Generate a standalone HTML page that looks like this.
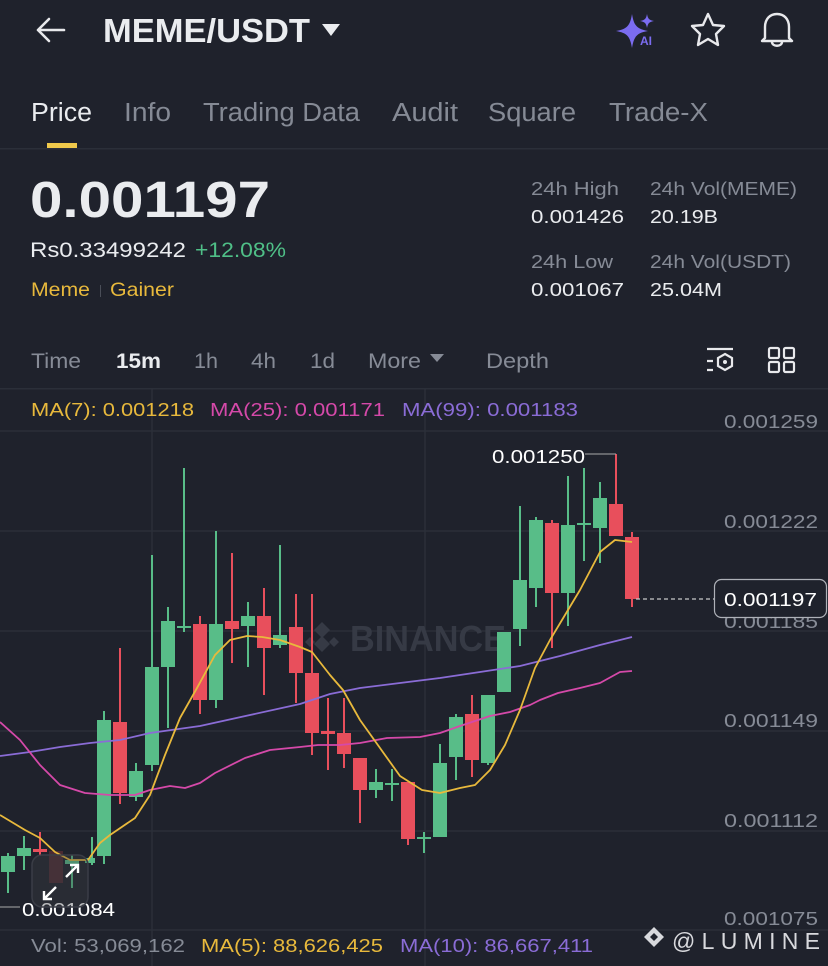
<!DOCTYPE html>
<html><head><meta charset="utf-8"><style>
html,body{margin:0;padding:0;background:#1f222c;}
svg{display:block;font-family:"Liberation Sans",sans-serif;}
</style></head><body>
<svg width="828" height="966" viewBox="0 0 828 966" xmlns="http://www.w3.org/2000/svg">
<rect width="828" height="966" fill="#1f222c"/>
<!-- header -->
<path d="M38 30 H64 M38 30 L49 19 M38 30 L49 41" stroke="#e8e9ec" stroke-width="2.6" fill="none" stroke-linecap="round"/>
<text x="103" y="42" font-size="33" font-weight="bold" fill="#eaecef" textLength="207" lengthAdjust="spacingAndGlyphs">MEME/USDT</text>
<path d="M322 24 H340 L331 36 Z" fill="#eaecef"/>
<path d="M632 14 C634 26 637 29 648 31 C637 33 634 36 632 48 C630 36 627 33 616 31 C627 29 630 26 632 14Z" fill="#7b6cf0"/>
<path d="M647 14 C648 19 649 20 654 21 C649 22 648 23 647 28 C646 23 645 22 640 21 C645 20 646 19 647 14Z" fill="#7b6cf0"/>
<text x="640" y="45" font-size="12" font-weight="bold" fill="#7b6cf0">AI</text>
<path d="M708 14 L713 25 L724 26 L716 34 L718 45 L708 39 L698 45 L700 34 L692 26 L703 25 Z" stroke="#e8e9ec" stroke-width="2.4" fill="none" stroke-linejoin="round"/>
<path d="M765 38 V27 C765 19 770 14 777 14 C784 14 789 19 789 27 V38 L792 41 H762 Z M772 42 C772 47 782 47 782 42" stroke="#e8e9ec" stroke-width="2.4" fill="none" stroke-linejoin="round"/>
<!-- tabs -->
<g font-size="25.5" lengthAdjust="spacingAndGlyphs">
<text x="31" y="121" fill="#eaecef" textLength="61" lengthAdjust="spacingAndGlyphs">Price</text>
<text x="124" y="121" fill="#858a95" textLength="47" lengthAdjust="spacingAndGlyphs">Info</text>
<text x="203" y="121" fill="#858a95" textLength="157" lengthAdjust="spacingAndGlyphs">Trading Data</text>
<text x="392" y="121" fill="#858a95" textLength="66" lengthAdjust="spacingAndGlyphs">Audit</text>
<text x="488" y="121" fill="#858a95" textLength="88" lengthAdjust="spacingAndGlyphs">Square</text>
<text x="609" y="121" fill="#858a95" textLength="99" lengthAdjust="spacingAndGlyphs">Trade-X</text>
</g>
<rect x="47" y="143" width="30" height="5" fill="#f0c94b"/>
<rect x="0" y="148" width="828" height="1.5" fill="#2b2f39"/>
<!-- price block -->
<text x="30" y="217" font-size="51" font-weight="bold" fill="#eaecef" textLength="240" lengthAdjust="spacingAndGlyphs">0.001197</text>
<text x="30" y="257" font-size="21" fill="#eaecef" textLength="156" lengthAdjust="spacingAndGlyphs">Rs0.33499242</text>
<text x="195" y="257" font-size="21" fill="#4fbf87" textLength="91" lengthAdjust="spacingAndGlyphs">+12.08%</text>
<text x="31" y="296" font-size="19.5" fill="#e8b93c" textLength="59" lengthAdjust="spacingAndGlyphs">Meme</text>
<rect x="100" y="285" width="1" height="12" fill="#4a4e58"/>
<text x="110" y="296" font-size="19.5" fill="#e8b93c" textLength="64" lengthAdjust="spacingAndGlyphs">Gainer</text>
<g font-size="18.5">
<text x="531" y="195" fill="#868b96" textLength="88" lengthAdjust="spacingAndGlyphs">24h High</text>
<text x="650" y="195" fill="#868b96" textLength="147" lengthAdjust="spacingAndGlyphs">24h Vol(MEME)</text>
<text x="531" y="223" fill="#eaecef" textLength="93" lengthAdjust="spacingAndGlyphs">0.001426</text>
<text x="650" y="223" fill="#eaecef" textLength="68" lengthAdjust="spacingAndGlyphs">20.19B</text>
<text x="531" y="268" fill="#868b96" textLength="82" lengthAdjust="spacingAndGlyphs">24h Low</text>
<text x="650" y="268" fill="#868b96" textLength="141" lengthAdjust="spacingAndGlyphs">24h Vol(USDT)</text>
<text x="531" y="296" fill="#eaecef" textLength="93" lengthAdjust="spacingAndGlyphs">0.001067</text>
<text x="650" y="296" fill="#eaecef" textLength="72" lengthAdjust="spacingAndGlyphs">25.04M</text>
</g>
<!-- timeframe row -->
<g font-size="21" fill="#868b96">
<text x="31" y="368" textLength="50" lengthAdjust="spacingAndGlyphs">Time</text>
<text x="116" y="368" fill="#eaecef" font-weight="bold" textLength="45" lengthAdjust="spacingAndGlyphs">15m</text>
<text x="194" y="368" textLength="24" lengthAdjust="spacingAndGlyphs">1h</text>
<text x="251" y="368" textLength="25" lengthAdjust="spacingAndGlyphs">4h</text>
<text x="310" y="368" textLength="25" lengthAdjust="spacingAndGlyphs">1d</text>
<text x="368" y="368" textLength="53" lengthAdjust="spacingAndGlyphs">More</text>
<text x="486" y="368" textLength="63" lengthAdjust="spacingAndGlyphs">Depth</text>
</g>
<path d="M430 354 H444 L437 362 Z" fill="#868b96"/>
<path d="M707 349 H733 M707 361 H713 M707 370 H713" stroke="#e8e9ec" stroke-width="2.2"/>
<path d="M725 354 L732 358 V366 L725 370 L718 366 V358 Z" stroke="#e8e9ec" stroke-width="2.2" fill="none"/>
<circle cx="725" cy="362" r="2" fill="#e8e9ec"/>
<g stroke="#e8e9ec" stroke-width="2.2" fill="none">
<rect x="769" y="348" width="10" height="10" rx="1.5"/><rect x="784" y="348" width="10" height="10" rx="1.5"/>
<rect x="769" y="362" width="10" height="10" rx="1.5"/><rect x="784" y="362" width="10" height="10" rx="1.5"/>
</g>
<rect x="0" y="388" width="828" height="1.5" fill="#2b2f39"/>
<!-- grid -->
<g stroke="#2d313b" stroke-width="1.3">
<line x1="0" y1="431" x2="828" y2="431"/><line x1="0" y1="531" x2="828" y2="531"/>
<line x1="0" y1="631" x2="828" y2="631"/><line x1="0" y1="731" x2="828" y2="731"/>
<line x1="0" y1="831" x2="828" y2="831"/><line x1="0" y1="930" x2="828" y2="930"/>
<line x1="152" y1="389" x2="152" y2="966"/><line x1="425" y1="389" x2="425" y2="966"/>
</g>
<!-- watermark -->
<g fill="#363a45">
<path d="M322 622 L330 630 L322 638 L314 630Z M322 636 L330 644 L322 652 L314 644Z M310 637 L315 642 L310 647 L305 642Z M334 637 L339 642 L334 647 L329 642Z"/>
<text x="350" y="651" font-size="36" font-weight="bold" textLength="156" lengthAdjust="spacingAndGlyphs">BINANCE</text>
</g>
<!-- MA legend -->
<g font-size="18.5">
<text x="31" y="416" fill="#e8b93c" textLength="163" lengthAdjust="spacingAndGlyphs">MA(7): 0.001218</text>
<text x="210" y="416" fill="#d549a9" textLength="175" lengthAdjust="spacingAndGlyphs">MA(25): 0.001171</text>
<text x="402" y="416" fill="#8a6cd6" textLength="176" lengthAdjust="spacingAndGlyphs">MA(99): 0.001183</text>
</g>
<!-- y labels -->
<g font-size="18.5" fill="#868b96">
<text x="724" y="428" textLength="94" lengthAdjust="spacingAndGlyphs">0.001259</text>
<text x="724" y="528" textLength="94" lengthAdjust="spacingAndGlyphs">0.001222</text>
<text x="724" y="628" textLength="94" lengthAdjust="spacingAndGlyphs">0.001185</text>
<text x="724" y="727" textLength="94" lengthAdjust="spacingAndGlyphs">0.001149</text>
<text x="724" y="827" textLength="94" lengthAdjust="spacingAndGlyphs">0.001112</text>
<text x="724" y="925" textLength="94" lengthAdjust="spacingAndGlyphs">0.001075</text>
</g>
<!-- candles -->
<g>
<g fill="#58bd88" stroke="#58bd88" stroke-width="2">
<line x1="8" y1="853" x2="8" y2="893"/><rect x="1" y="856" width="14" height="16" stroke="none"/>
<line x1="24" y1="836" x2="24" y2="870"/><rect x="17" y="848" width="14" height="8" stroke="none"/>
<line x1="72" y1="855" x2="72" y2="888"/><rect x="65" y="860" width="14" height="4" stroke="none"/>
<line x1="92" y1="837" x2="92" y2="865"/><rect x="85" y="858" width="10" height="5" stroke="none"/>
<line x1="104" y1="711" x2="104" y2="864"/><rect x="97" y="720" width="14" height="136" stroke="none"/>
<line x1="136" y1="763" x2="136" y2="801"/><rect x="129" y="771" width="14" height="26" stroke="none"/>
<line x1="152" y1="555" x2="152" y2="771"/><rect x="145" y="667" width="14" height="98" stroke="none"/>
<line x1="168" y1="607" x2="168" y2="728"/><rect x="161" y="621" width="14" height="46" stroke="none"/>
<line x1="184" y1="468" x2="184" y2="632"/><rect x="177" y="626" width="14" height="2" stroke="none"/>
<line x1="216" y1="531" x2="216" y2="708"/><rect x="209" y="624" width="14" height="76" stroke="none"/>
<line x1="248" y1="602" x2="248" y2="667"/><rect x="241" y="616" width="14" height="10" stroke="none"/>
<line x1="280" y1="545" x2="280" y2="648"/><rect x="273" y="635" width="14" height="10" stroke="none"/>
<line x1="376" y1="769" x2="376" y2="798"/><rect x="369" y="782" width="14" height="8" stroke="none"/>
<line x1="392" y1="769" x2="392" y2="801"/><rect x="385" y="783" width="14" height="2" stroke="none"/>
<line x1="424" y1="832" x2="424" y2="853"/><rect x="417" y="837" width="14" height="2" stroke="none"/>
<line x1="440" y1="744" x2="440" y2="837"/><rect x="433" y="763" width="14" height="74" stroke="none"/>
<line x1="456" y1="714" x2="456" y2="780"/><rect x="449" y="717" width="14" height="40" stroke="none"/>
<line x1="488" y1="695" x2="488" y2="765"/><rect x="481" y="695" width="14" height="68" stroke="none"/>
<rect x="497" y="632" width="14" height="60" stroke="none"/>
<line x1="520" y1="506" x2="520" y2="646"/><rect x="513" y="580" width="14" height="49" stroke="none"/>
<line x1="536" y1="517" x2="536" y2="607"/><rect x="529" y="520" width="14" height="68" stroke="none"/>
<line x1="568" y1="476" x2="568" y2="626"/><rect x="561" y="525" width="14" height="68" stroke="none"/>
<line x1="584" y1="468" x2="584" y2="561"/><rect x="577" y="523" width="14" height="2" stroke="none"/>
<line x1="600" y1="482" x2="600" y2="563"/><rect x="593" y="498" width="14" height="30" stroke="none"/>
</g>
<g fill="#e84f5c" stroke="#e84f5c" stroke-width="2">
<line x1="40" y1="832" x2="40" y2="856"/><rect x="33" y="849" width="14" height="3" stroke="none"/>
<line x1="120" y1="648" x2="120" y2="804"/><rect x="113" y="722" width="14" height="71" stroke="none"/>
<line x1="200" y1="616" x2="200" y2="714"/><rect x="193" y="624" width="14" height="76" stroke="none"/>
<line x1="232" y1="553" x2="232" y2="663"/><rect x="225" y="621" width="14" height="8" stroke="none"/>
<line x1="264" y1="588" x2="264" y2="695"/><rect x="257" y="616" width="14" height="32" stroke="none"/>
<line x1="296" y1="594" x2="296" y2="703"/><rect x="289" y="627" width="14" height="46" stroke="none"/>
<line x1="312" y1="594" x2="312" y2="755"/><rect x="305" y="673" width="14" height="60" stroke="none"/>
<line x1="328" y1="698" x2="328" y2="770"/><rect x="321" y="731" width="14" height="3" stroke="none"/>
<line x1="344" y1="698" x2="344" y2="768"/><rect x="337" y="733" width="14" height="21" stroke="none"/>
<line x1="360" y1="758" x2="360" y2="823"/><rect x="353" y="758" width="14" height="32" stroke="none"/>
<line x1="408" y1="782" x2="408" y2="845"/><rect x="401" y="782" width="14" height="57" stroke="none"/>
<line x1="472" y1="695" x2="472" y2="777"/><rect x="465" y="714" width="14" height="46" stroke="none"/>
<line x1="552" y1="520" x2="552" y2="648"/><rect x="545" y="523" width="14" height="70" stroke="none"/>
<line x1="616" y1="454" x2="616" y2="536"/><rect x="609" y="504" width="14" height="32" stroke="none"/>
<line x1="632" y1="532" x2="632" y2="607"/><rect x="625" y="537" width="14" height="62" stroke="none"/>
</g>
<rect x="49" y="851" width="14" height="32" fill="#4a2a32"/>
</g>
<!-- MA lines -->
<g fill="none" stroke-width="1.8" stroke-linejoin="round">
<polyline stroke="#8a6cd6" points="0,756 30,752 60,747 90,743 120,740 150,733 200,726 250,715 300,704 330,694 360,688 400,683 440,678 480,672 520,666 560,656 600,645 632,637"/>
<polyline stroke="#d549a9" points="0,722 20,740 40,765 60,785 85,793 110,795 135,795 150,790 170,786 185,788 200,783 215,773 245,758 270,750 300,747 318,745 340,745 360,743 387,738 420,737 440,733 460,726 490,716 510,712 530,705 540,700 558,693 580,688 600,683 620,672 632,671"/>
<polyline stroke="#e8b93c" points="0,815 25,830 40,838 55,852 70,860 88,860 100,843 110,835 135,818 150,795 165,755 180,718 197,688 215,655 230,640 247,636 262,637 280,640 300,647 312,652 330,675 343,690 360,720 380,748 400,776 422,790 440,793 460,788 475,785 490,770 505,745 520,710 535,668 550,640 565,615 580,590 600,552 615,540 632,542"/>
</g>
<!-- annotations -->
<text x="492" y="463" font-size="18.5" fill="#ffffff" textLength="93" lengthAdjust="spacingAndGlyphs">0.001250</text>
<path d="M585 454 H616" stroke="#aaa" stroke-width="1"/>
<path d="M636 599 H714" stroke="#c8c8c8" stroke-width="1.2" stroke-dasharray="4,3"/>
<rect x="714.5" y="579.5" width="112" height="38" rx="7" fill="#1f222c" stroke="#aeb1b8" stroke-width="1.2"/>
<text x="724" y="606" font-size="18.5" fill="#ffffff" textLength="93" lengthAdjust="spacingAndGlyphs">0.001197</text>
<path d="M0 907 H20" stroke="#aaa" stroke-width="1"/>
<text x="22" y="916" font-size="18.5" fill="#ffffff" textLength="93" lengthAdjust="spacingAndGlyphs">0.001084</text>
<rect x="32" y="855" width="56" height="52" rx="10" fill="rgba(60,62,70,0.35)" stroke="#3a3d46" stroke-width="1.5"/>
<path d="M66 877 L78 865 M70 865 H78 V873 M56 887 L44 899 M44 891 V899 H52" stroke="#fff" stroke-width="2.4" fill="none"/>
<!-- volume legend -->
<g font-size="18.5">
<text x="31" y="952" fill="#868b96" textLength="154" lengthAdjust="spacingAndGlyphs">Vol: 53,069,162</text>
<text x="201" y="952" fill="#e8b93c" textLength="182" lengthAdjust="spacingAndGlyphs">MA(5): 88,626,425</text>
<text x="400" y="952" fill="#8a6cd6" textLength="193" lengthAdjust="spacingAndGlyphs">MA(10): 86,667,411</text>
</g>
<path d="M654 927 L664 937 L654 947 L644 937 Z M654 933 L658 937 L654 941 L650 937Z" fill="#d8d9dd" fill-rule="evenodd"/>
<text x="672" y="949" font-size="23" fill="#d8d9dd" textLength="148" lengthAdjust="spacing">@LUMINE</text>
</svg>
</body></html>
